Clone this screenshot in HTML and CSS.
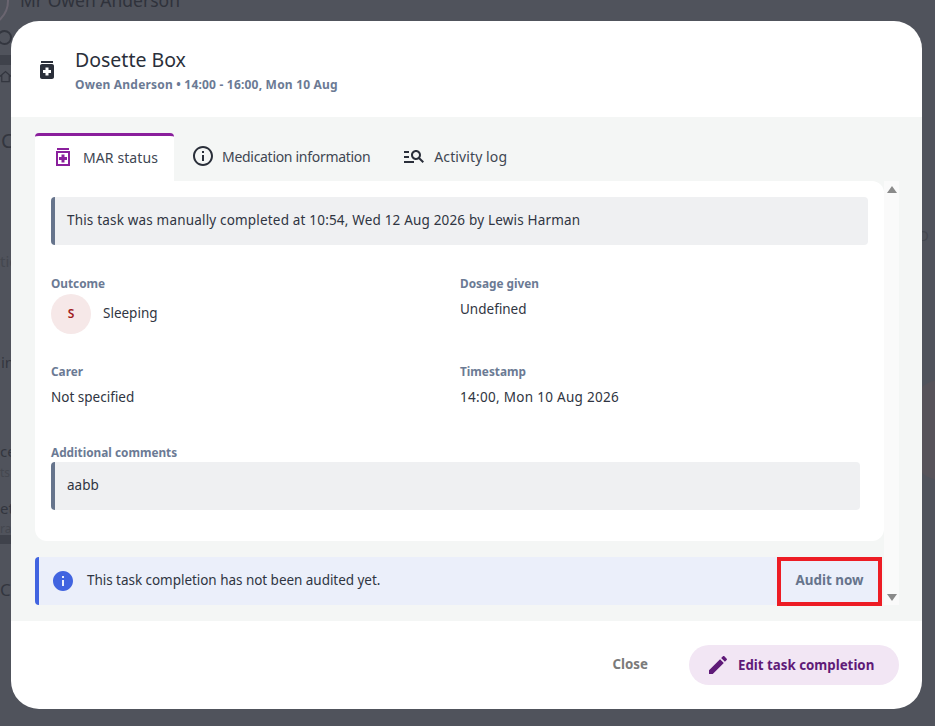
FILE: index.html
```html
<!DOCTYPE html>
<html lang="en">

<head>
    <meta charset="UTF-8" />
    <title>Dosette Box</title>
    <link rel="stylesheet" href="styles.css">
</head>

<body>
    <!-- page behind the dialog, only the edges show -->
    <div class="backdrop">
        <span class="bg-ring"></span>
        <span class="bg-ring ring-small"></span>
        <svg class="bg-home" viewBox="0 0 24 24" fill="none" stroke="#33363f" stroke-width="2">
            <path d="M3 12l9-8 9 8M6 10v10h12V10" />
        </svg>
        <span class="bg-name">Mr Owen Anderson</span>
        <span class="bg-bit bit-c">C</span>
        <span class="bg-bit bit-tic">tic</span>
        <span class="bg-bit bit-in">in</span>
        <span class="bg-bit bit-ce">ce</span>
        <span class="bg-bit bit-ts">ts</span>
        <span class="bg-bit bit-eta">eta</span>
        <span class="bg-bit bit-ra">ra</span>
        <span class="bg-bit bit-co">Co</span>
        <span class="bg-bit bit-d">D</span>
        <span class="bg-band"></span>
        <span class="bg-band band-top"></span>
        <span class="bg-blob"></span>
    </div>

    <div class="modal">
        <div class="modal-header">
            <svg class="icon" viewBox="0 0 24 24" fill="#2a2f3a">
                <path d="M6 3h12v2H6zm11 3H7c-1.1 0-2 .9-2 2v11c0 1.1.9 2 2 2h10c1.1 0 2-.9 2-2V8c0-1.1-.9-2-2-2zm-1 9h-2.5v2.5h-3V15H8v-3h2.5V9.5h3V12H16v3z" />
            </svg>
            <div>
                <h2>Dosette Box</h2>
                <p class="subtitle">Owen Anderson • 14:00 - 16:00, Mon 10 Aug</p>
            </div>
        </div>

        <div class="modal-body">
            <div class="tabs">
                <div class="tab active">
                    <svg class="icon" viewBox="0 0 24 24" fill="#8a1f9c">
                        <path fill-rule="evenodd" d="M6 3h12v2H6zM5 6h14v15H5zm2 2v11h10V8z" />
                        <path d="M8 12h2.5V9.5h3V12H16v3h-2.5v2.5h-3V15H8z" />
                    </svg>
                    MAR status
                </div>
                <div class="tab tab-narrow">
                    <svg class="icon" viewBox="0 0 24 24" fill="#2a2f3a">
                        <path d="M11 7h2v2h-2zm0 4h2v6h-2zm1-9C6.48 2 2 6.48 2 12s4.48 10 10 10 10-4.48 10-10S17.52 2 12 2zm0 18c-4.41 0-8-3.59-8-8s3.59-8 8-8 8 3.59 8 8-3.59 8-8 8z" />
                    </svg>
                    Medication information
                </div>
                <div class="tab tab-wide">
                    <svg class="icon" viewBox="0 0 24 24" fill="#2a2f3a">
                        <path d="M7 9H2V7h5v2zm0 3H2v2h5v-2zm13.59 7l-3.83-3.83c-.8.52-1.74.83-2.76.83-2.76 0-5-2.24-5-5s2.24-5 5-5 5 2.24 5 5c0 1.02-.31 1.96-.83 2.75L22 17.59 20.59 19zM17 11c0-1.65-1.35-3-3-3s-3 1.35-3 3 1.35 3 3 3 3-1.35 3-3zM2 19h10v-2H2v2z" />
                    </svg>
                    Activity log
                </div>
            </div>

            <div class="scroll-area">
                <div class="scroll-content">
                    <div class="card">
                        <div class="note note-wide">This task was manually completed at 10:54, Wed 12 Aug 2026 by Lewis Harman</div>

                        <div class="details">
                            <div class="field">
                                <div class="label">Outcome</div>
                                <div class="outcome">
                                    <span class="avatar">S</span>
                                    <span class="outcome-name">Sleeping</span>
                                </div>
                            </div>
                            <div class="field">
                                <div class="label">Dosage given</div>
                                <div class="value">Undefined</div>
                            </div>
                            <div class="field">
                                <div class="label">Carer</div>
                                <div class="value">Not specified</div>
                            </div>
                            <div class="field">
                                <div class="label">Timestamp</div>
                                <div class="value value-time">14:00, Mon 10 Aug 2026</div>
                            </div>
                        </div>

                        <div class="label label-comments">Additional comments</div>
                        <div class="note note-comment">aabb</div>
                    </div>

                    <div class="audit-bar">
                        <svg class="icon" viewBox="0 0 24 24" fill="#4164e0">
                            <path d="M12 2C6.48 2 2 6.48 2 12s4.48 10 10 10 10-4.48 10-10S17.52 2 12 2zm1 15h-2v-6h2v6zm0-8h-2V7h2v2z" />
                        </svg>
                        <span class="audit-text">This task completion has not been audited yet.</span>
                        <button class="audit-btn">Audit now</button>
                    </div>
                </div>

                <div class="scrollbar">
                    <span class="arrow-up"></span>
                    <span class="arrow-down"></span>
                </div>
            </div>
        </div>

        <div class="modal-footer">
            <button class="close-btn">Close</button>
            <button class="edit-btn">
                <svg class="icon" viewBox="0 0 24 24" fill="#5f1a78">
                    <path d="M3 17.25V21h3.75L17.81 9.94l-3.75-3.75L3 17.25zM20.71 7.04c.39-.39.39-1.02 0-1.41l-2.34-2.34c-.39-.39-1.02-.39-1.41 0l-1.83 1.83 3.75 3.75 1.83-1.83z" />
                </svg>
                Edit task completion
            </button>
        </div>
    </div>
</body>

</html>
```

FILE: styles.css
```css
body {
    margin: 0;
    height: 726px;
    overflow: hidden;
    background-color: #50535c;
    font-family: 'Noto Sans', sans-serif;
    font-size: 13.5px;
    color: #2f3542;
}

/* backdrop scraps */
.backdrop {
    position: absolute;
    inset: 0;
    overflow: hidden;
}

.bg-name {
    position: absolute;
    left: 20px;
    top: -12px;
    font-size: 17.5px;
    line-height: 24px;
    color: #2f323b;
}

.bg-ring {
    position: absolute;
    left: -43px;
    top: -25px;
    width: 48px;
    height: 48px;
    border: 2px solid #6a6570;
    border-radius: 50%;
}

.ring-small {
    left: -3px;
    top: 30px;
    width: 11px;
    height: 11px;
    border-color: #33363f;
}

.bg-home {
    position: absolute;
    left: -2px;
    top: 69px;
    width: 15px;
    height: 15px;
}

.bg-bit {
    position: absolute;
    left: 0;
    color: #33363f;
    font-size: 15px;
    line-height: 20px;
}

.bit-c { top: 131px; left: 1px; font-size: 20px; }
.bit-tic { top: 251px; color: #44474f; }
.bit-in { top: 352px; left: 1px; }
.bit-ce { top: 441px; }
.bit-ts { top: 463px; font-size: 12px; color: #44474f; }
.bit-eta { top: 498px; }
.bit-ra { top: 519px; font-size: 12px; color: #44474f; }
.bit-co { top: 580px; font-size: 17px; }
.bit-d { top: 225px; left: 918px; color: #44474f; }

.bg-band {
    position: absolute;
    left: 0;
    top: 535px;
    width: 12px;
    height: 9px;
    background-color: #3f424b;
}

.band-top {
    top: 55px;
    height: 10px;
}

.bg-blob {
    position: absolute;
    left: 905px;
    top: 380px;
    width: 70px;
    height: 100px;
    border-radius: 50%;
    background-color: #57535a;
}

.icon {
    width: 24px;
    height: 24px;
    flex-shrink: 0;
}

.modal {
    position: relative;
    display: flex;
    flex-direction: column;
    width: 911px;
    height: 688px;
    margin: 21px 0 0 11px;
    background: #fff;
    border-radius: 28px;
    overflow: hidden;
}

.modal-header {
    display: flex;
    align-items: center;
    gap: 16px;
    height: 96px;
    padding: 2px 24px 0;
    box-sizing: border-box;
}

.modal-header h2 {
    margin: 0;
    font-size: 19.5px;
    font-weight: 400;
    line-height: 26px;
    color: #2a2f3a;
}

.subtitle {
    margin: 4px 0 0;
    font-size: 12px;
    font-weight: 700;
    letter-spacing: 0.2px;
    line-height: 16px;
    color: #6b7a94;
}

.modal-body {
    flex: 1;
    padding: 16px 23px 16px 24px;
    background-color: #f4f6f5;
}

.tabs {
    display: flex;
    height: 48px;
}

.tab {
    display: flex;
    align-items: center;
    gap: 8px;
    padding: 0 16px;
    font-size: 14px;
    color: #404652;
}

.tab-narrow {
    gap: 7px;
    letter-spacing: -0.3px;
    padding: 0 16px 2px 17px;
}

.tab-wide {
    letter-spacing: 0.1px;
    padding-bottom: 2px;
}

.tab.active {
    box-sizing: border-box;
    padding-bottom: 3px;
    letter-spacing: 0.1px;
    border-top: 3px solid #8a1f9c;
    border-radius: 4px 4px 0 0;
    background: #fff;
}

.scroll-area {
    display: flex;
    height: 424px;
}

.scroll-content {
    width: 849px;
}

.card {
    box-sizing: border-box;
    height: 360px;
    padding: 16px;
    background: #fff;
    border-radius: 0 12px 12px 12px;
}

.note {
    display: flex;
    align-items: center;
    box-sizing: border-box;
    height: 48px;
    padding: 0 0 2px 12px;
    background-color: #eff0f2;
    border-left: 4px solid #66748c;
    border-radius: 4px;
}

.note-wide {
    letter-spacing: 0.18px;
}

.note-comment {
    width: 809px;
}

.details {
    display: grid;
    grid-template-columns: 409px 1fr;
    grid-template-rows: 88px 81px;
    margin-top: 31px;
}

.label {
    font-size: 11.8px;
    font-weight: 700;
    line-height: 14px;
    color: #6b7a94;
}

.label-comments {
    margin-bottom: 3px;
}

.value {
    margin-top: 9px;
    line-height: 20px;
}

.value-time {
    letter-spacing: 0.3px;
}

.outcome {
    display: flex;
    align-items: center;
    gap: 12px;
    margin-top: 4px;
}

.outcome-name {
    padding-bottom: 2px;
}

.avatar {
    display: flex;
    align-items: center;
    justify-content: center;
    box-sizing: border-box;
    width: 40px;
    height: 40px;
    padding-bottom: 2px;
    border-radius: 50%;
    background-color: #f6e8e8;
    color: #a01c1c;
    font-size: 12px;
    font-weight: 600;
}

.audit-bar {
    display: flex;
    align-items: center;
    box-sizing: border-box;
    width: 847px;
    height: 48px;
    margin-top: 16px;
    padding-left: 12px;
    gap: 12px;
    background-color: #ebeffa;
    border-left: 4px solid #4164e0;
    border-radius: 4px 0 0 4px;
}

.audit-text {
    flex: 1;
    padding-bottom: 2px;
    letter-spacing: -0.04px;
}

.audit-btn {
    align-self: flex-start;
    width: 105px;
    height: 49px;
    padding: 0 0 4px;
    background: none;
    border: 4px solid #ed1c24;
    font-family: inherit;
    font-size: 13.4px;
    font-weight: 700;
    color: #66748c;
}

.scrollbar {
    display: flex;
    flex-direction: column;
    justify-content: space-between;
    align-items: center;
    box-sizing: border-box;
    width: 15px;
    padding: 5px 0 4px;
    background-color: #fafafa;
}

.arrow-up,
.arrow-down {
    width: 0;
    height: 0;
    border-left: 5px solid transparent;
    border-right: 5px solid transparent;
}

.arrow-up {
    border-bottom: 7px solid #8a8a8a;
}

.arrow-down {
    border-top: 7px solid #8a8a8a;
}

.modal-footer {
    display: flex;
    align-items: center;
    justify-content: flex-end;
    gap: 41px;
    height: 88px;
    padding: 0 23px;
    box-sizing: border-box;
}

.close-btn,
.edit-btn {
    border: none;
    background: none;
    padding: 0;
    font-family: inherit;
    font-size: 13.3px;
    font-weight: 700;
}

.close-btn {
    color: #7a7a7a;
    padding-bottom: 2px;
}

.edit-btn {
    display: flex;
    align-items: center;
    gap: 8px;
    width: 210px;
    height: 40px;
    padding: 0 0 1px 17px;
    box-sizing: border-box;
    border-radius: 20px;
    background-color: #f2e6f4;
    color: #5f1a78;
}
```
